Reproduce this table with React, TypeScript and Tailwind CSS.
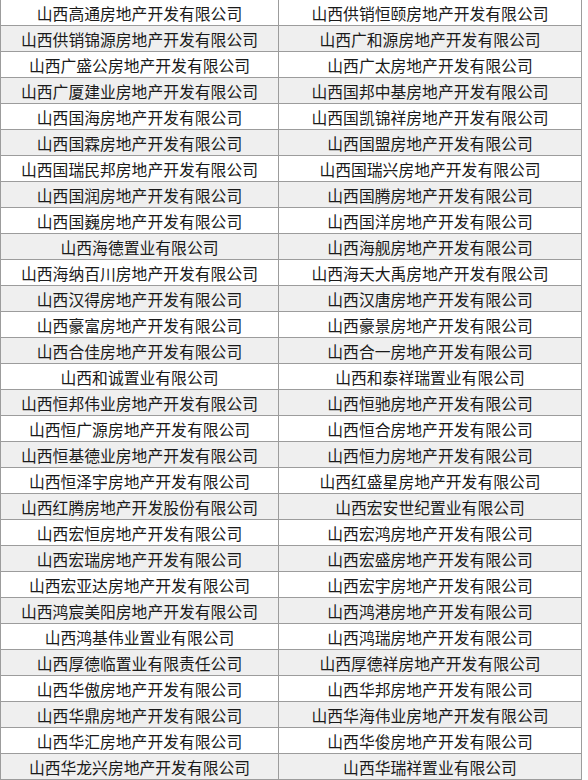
const rows: [string, string][] = [
  ['山西高通房地产开发有限公司', '山西供销恒颐房地产开发有限公司'],
  ['山西供销锦源房地产开发有限公司', '山西广和源房地产开发有限公司'],
  ['山西广盛公房地产开发有限公司', '山西广太房地产开发有限公司'],
  ['山西广厦建业房地产开发有限公司', '山西国邦中基房地产开发有限公司'],
  ['山西国海房地产开发有限公司', '山西国凯锦祥房地产开发有限公司'],
  ['山西国霖房地产开发有限公司', '山西国盟房地产开发有限公司'],
  ['山西国瑞民邦房地产开发有限公司', '山西国瑞兴房地产开发有限公司'],
  ['山西国润房地产开发有限公司', '山西国腾房地产开发有限公司'],
  ['山西国巍房地产开发有限公司', '山西国洋房地产开发有限公司'],
  ['山西海德置业有限公司', '山西海舰房地产开发有限公司'],
  ['山西海纳百川房地产开发有限公司', '山西海天大禹房地产开发有限公司'],
  ['山西汉得房地产开发有限公司', '山西汉唐房地产开发有限公司'],
  ['山西豪富房地产开发有限公司', '山西豪景房地产开发有限公司'],
  ['山西合佳房地产开发有限公司', '山西合一房地产开发有限公司'],
  ['山西和诚置业有限公司', '山西和泰祥瑞置业有限公司'],
  ['山西恒邦伟业房地产开发有限公司', '山西恒驰房地产开发有限公司'],
  ['山西恒广源房地产开发有限公司', '山西恒合房地产开发有限公司'],
  ['山西恒基德业房地产开发有限公司', '山西恒力房地产开发有限公司'],
  ['山西恒泽宇房地产开发有限公司', '山西红盛星房地产开发有限公司'],
  ['山西红腾房地产开发股份有限公司', '山西宏安世纪置业有限公司'],
  ['山西宏恒房地产开发有限公司', '山西宏鸿房地产开发有限公司'],
  ['山西宏瑞房地产开发有限公司', '山西宏盛房地产开发有限公司'],
  ['山西宏亚达房地产开发有限公司', '山西宏宇房地产开发有限公司'],
  ['山西鸿宸美阳房地产开发有限公司', '山西鸿港房地产开发有限公司'],
  ['山西鸿基伟业置业有限公司', '山西鸿瑞房地产开发有限公司'],
  ['山西厚德临置业有限责任公司', '山西厚德祥房地产开发有限公司'],
  ['山西华傲房地产开发有限公司', '山西华邦房地产开发有限公司'],
  ['山西华鼎房地产开发有限公司', '山西华海伟业房地产开发有限公司'],
  ['山西华汇房地产开发有限公司', '山西华俊房地产开发有限公司'],
  ['山西华龙兴房地产开发有限公司', '山西华瑞祥置业有限公司'],
]

export default function App() {
  return (
    <div className="w-[588px] h-[780px] overflow-hidden bg-white font-['Noto_Sans_CJK_SC',sans-serif] text-[15.8px] text-[#1a1a1a]">
      {rows.map(([left, right], i) => (
        <div
          key={i}
          className={`flex w-[582px] h-[26px] border-b border-[#9c9c9c] ${i % 2 ? 'bg-[#efefef]' : 'bg-white'}`}
        >
          <div className="w-[279px] flex items-center justify-center pt-[2px] leading-none border-l border-r border-[#9c9c9c]">
            {left}
          </div>
          <div className="w-[303px] flex items-center justify-center pt-[2px] leading-none border-r border-[#9c9c9c]">
            {right}
          </div>
        </div>
      ))}
    </div>
  )
}
